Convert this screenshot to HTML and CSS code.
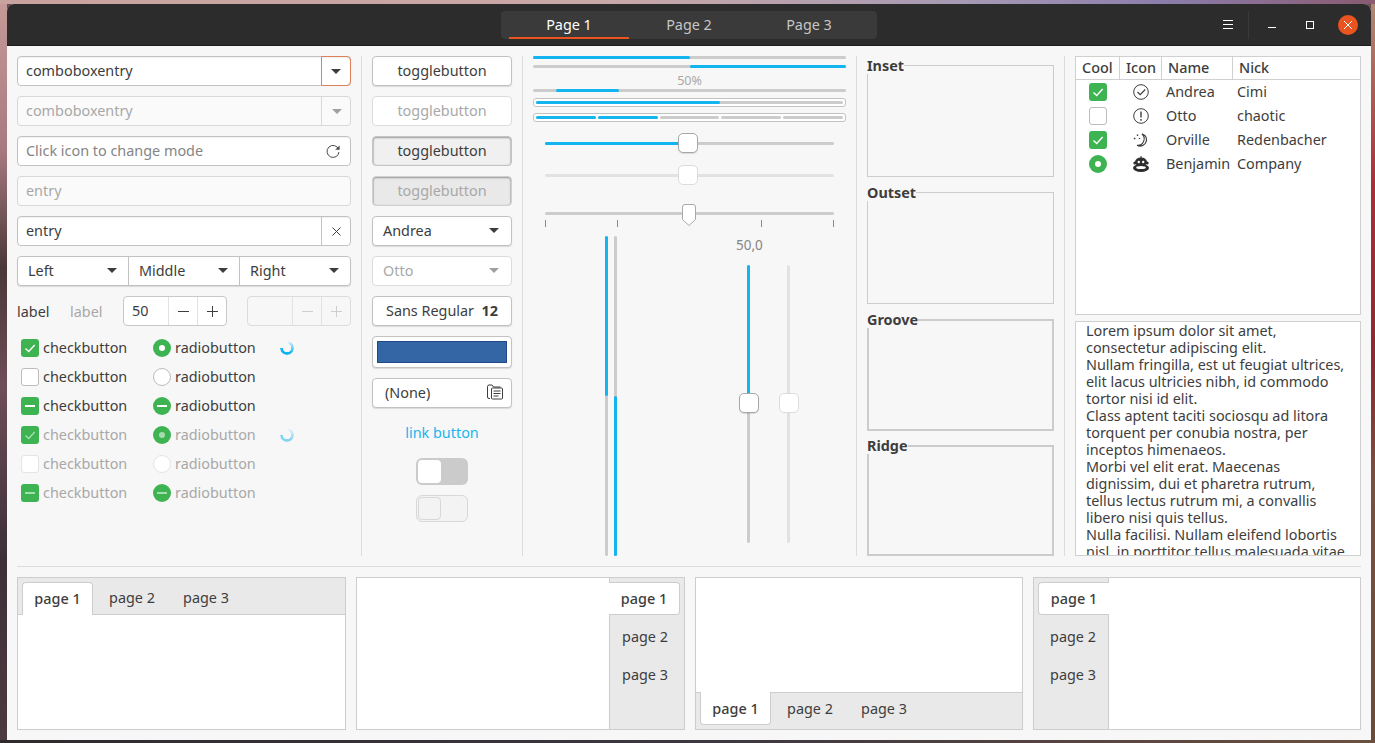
FILE: index.html
```html
<!DOCTYPE html>
<html lang="en">
<head>
  <meta charset="UTF-8">
  <meta name="viewport" content="width=device-width, initial-scale=1.0">
  <title>GTK+ Widget Factory</title>
  <link rel="stylesheet" href="styles.css">
</head>
<body>

  <svg class="sprite" xmlns="http://www.w3.org/2000/svg">
    <symbol id="tick" viewBox="0 0 18 18"><path d="M4.5 9.5l3.2 3 6-6.5" fill="none" stroke="currentColor" stroke-width="1.4"/></symbol>
    <symbol id="dash" viewBox="0 0 18 18"><rect x="4" y="8" width="10" height="2" fill="currentColor"/></symbol>
    <symbol id="dot" viewBox="0 0 18 18"><circle cx="9" cy="9" r="3" fill="currentColor"/></symbol>
    <symbol id="minus" viewBox="0 0 11 11"><path d="M0 5.500h11" stroke="currentColor" stroke-width="1"/></symbol>
    <symbol id="plus" viewBox="0 0 11 11"><path d="M0 5.500h11M5.500 0v11" stroke="currentColor" stroke-width="1"/></symbol>
  </svg>

  <div class="window">

    <!-- Title bar -->
    <header class="titlebar">
      <div></div>
      <div class="stack-switcher">
        <div class="stack-tab active">Page 1</div>
        <div class="stack-tab">Page 2</div>
        <div class="stack-tab">Page 3</div>
      </div>
      <div class="title-controls">
        <svg class="menu-icon" viewBox="0 0 10 9"><path d="M0 .5h10M0 4.5h10M0 8.5h10" stroke="#fff" stroke-width="1"/></svg>
        <span class="title-sep"></span>
        <svg class="win-icon win-min" viewBox="0 0 8 8"><path d="M0 6.500h8" stroke="#fff" stroke-width="1"/></svg>
        <svg class="win-icon win-max" viewBox="0 0 8 8"><rect x=".5" y=".5" width="7" height="7" fill="none" stroke="#fff"/></svg>
        <span class="win-close">
          <svg viewBox="0 0 8 8"><path d="M0 0l8 8M8 0l-8 8" stroke="#fff" stroke-width="1"/></svg>
        </span>
      </div>
    </header>

    <div class="content">
      <div class="top-row">

        <!-- Entries, checks and radios -->
        <div class="col col-entries">
          <div class="field">
            <span class="field-text">comboboxentry</span>
            <span class="field-btn focus"><i class="arrow"></i></span>
          </div>
          <div class="field disabled">
            <span class="field-text">comboboxentry</span>
            <span class="field-btn"><i class="arrow"></i></span>
          </div>
          <div class="field">
            <span class="field-text placeholder">Click icon to change mode</span>
            <svg class="refresh-icon" viewBox="0 0 16 16"><path d="M13.6 6.2A6 6 0 1 0 14 9" fill="none" stroke="#4a4a4a" stroke-width="1"/><path d="M14.6 2.4v4.4h-4.4z" fill="#4a4a4a"/></svg>
          </div>
          <div class="field disabled">
            <span class="field-text">entry</span>
          </div>
          <div class="field">
            <span class="field-text">entry</span>
            <span class="field-btn">
              <svg class="clear-icon" viewBox="0 0 9 9"><path d="M.5.5l8 8M8.5.5l-8 8" stroke="#3d3d3d" stroke-width="1"/></svg>
            </span>
          </div>
          <div class="linked">
            <div class="linked-item"><span>Left</span><i class="arrow"></i></div>
            <div class="linked-item"><span>Middle</span><i class="arrow"></i></div>
            <div class="linked-item"><span>Right</span><i class="arrow"></i></div>
          </div>
          <div class="spin-row">
            <span class="spin-label">label</span>
            <span class="spin-label muted">label</span>
            <div class="spin">
              <span class="spin-value">50</span>
              <span class="spin-btn"><svg><use href="#minus"/></svg></span>
              <span class="spin-btn"><svg><use href="#plus"/></svg></span>
            </div>
            <div class="spin disabled">
              <span class="spin-value"></span>
              <span class="spin-btn"><svg><use href="#minus"/></svg></span>
              <span class="spin-btn"><svg><use href="#plus"/></svg></span>
            </div>
          </div>
          <div class="checks">
            <label class="check-item"><span class="box green"><svg><use href="#tick"/></svg></span>checkbutton</label>
            <label class="check-item"><span class="box round green"><svg><use href="#dot"/></svg></span>radiobutton</label>
            <span class="spinner"></span>

            <label class="check-item"><span class="box"></span>checkbutton</label>
            <label class="check-item"><span class="box round"></span>radiobutton</label>
            <span></span>

            <label class="check-item"><span class="box green"><svg><use href="#dash"/></svg></span>checkbutton</label>
            <label class="check-item"><span class="box round green"><svg><use href="#dash"/></svg></span>radiobutton</label>
            <span></span>

            <label class="check-item off"><span class="box green"><svg><use href="#tick"/></svg></span>checkbutton</label>
            <label class="check-item off"><span class="box round green"><svg><use href="#dot"/></svg></span>radiobutton</label>
            <span class="spinner faded"></span>

            <label class="check-item off"><span class="box"></span>checkbutton</label>
            <label class="check-item off"><span class="box round"></span>radiobutton</label>
            <span></span>

            <label class="check-item off"><span class="box green"><svg><use href="#dash"/></svg></span>checkbutton</label>
            <label class="check-item off"><span class="box round green"><svg><use href="#dash"/></svg></span>radiobutton</label>
            <span></span>
          </div>
        </div>

        <div class="vsep"></div>

        <!-- Buttons -->
        <div class="col col-buttons">
          <div class="btn">togglebutton</div>
          <div class="btn disabled">togglebutton</div>
          <div class="btn pressed">togglebutton</div>
          <div class="btn pressed disabled">togglebutton</div>
          <div class="btn spread"><span>Andrea</span><i class="arrow"></i></div>
          <div class="btn spread disabled"><span>Otto</span><i class="arrow"></i></div>
          <div class="btn font-btn"><span>Sans Regular</span><b>12</b></div>
          <div class="btn color-btn"><span class="swatch"></span></div>
          <div class="btn file-btn">
            <span>(None)</span>
            <svg class="file-icon" viewBox="0 0 16 16" fill="none" stroke="#3d3d3d" stroke-width="1">
              <path d="M3 14.5H2A1.5 1.5 0 0 1 .5 13V2.500A1.500 1.500 0 0 1 2 1h3l1.500 2h7"/>
              <rect x="4.500" y="4" width="11" height="11" rx="1"/>
              <path d="M6.500 7h7M6.500 9.500h7M6.500 12h5"/>
            </svg>
          </div>
          <div class="link-btn">link button</div>
          <div class="switch"><span class="knob"></span></div>
          <div class="switch disabled"><span class="knob"></span></div>
        </div>

        <div class="vsep"></div>

        <!-- Progress bars and scales -->
        <div class="col col-scales">
          <div class="bar"><span class="fill" style="width: 50%"></span></div>
          <div class="bar bar-right"><span class="fill" style="width: 50%"></span></div>
          <div class="bar-text">50%</div>
          <div class="bar"><span class="fill fill-pulse" style="width: 20%"></span></div>
          <div class="bar-box"><div class="bar"><span class="fill" style="width: 60%"></span></div></div>
          <div class="bar-box segments">
            <span class="seg on"></span><span class="seg on"></span><span class="seg"></span><span class="seg"></span><span class="seg"></span>
          </div>
          <div class="hscale"><span class="fill" style="width: 49%"></span><span class="handle"></span></div>
          <div class="hscale disabled"><span class="handle"></span></div>
          <div class="hscale marked">
            <svg class="pointer" viewBox="0 0 14 22"><path d="M.5 3a2.500 2.500 0 0 1 2.500-2.500h8A2.500 2.500 0 0 1 13.500 3v12.500L7 21.500.5 15.500z" fill="#fff" stroke="#a8a8a8"/></svg>
          </div>
          <div class="ticks"><i></i><i></i><i></i><i></i><i></i></div>
          <div class="vertical-area">
            <div class="vbars">
              <div class="vbar"><span class="vfill" style="height: 50%"></span></div>
              <div class="vbar vbar-bottom"><span class="vfill" style="height: 50%"></span></div>
            </div>
            <div class="vscales">
              <div class="vscale-value">50,0</div>
              <div class="vscale-row">
                <div class="vscale"><span class="vfill" style="height: 49%"></span><span class="handle"></span></div>
                <div class="vscale disabled"><span class="handle"></span></div>
              </div>
            </div>
          </div>
        </div>

        <div class="vsep"></div>

        <!-- Frames -->
        <div class="col col-frames">
          <fieldset class="frame"><legend>Inset</legend></fieldset>
          <fieldset class="frame"><legend>Outset</legend></fieldset>
          <fieldset class="frame thick"><legend>Groove</legend></fieldset>
          <fieldset class="frame thick last"><legend>Ridge</legend></fieldset>
        </div>

        <div class="vsep"></div>

        <!-- Tree and text view -->
        <div class="col col-tree">
          <div class="tree">
            <div class="tree-head">
              <span>Cool</span><span>Icon</span><span>Name</span><span>Nick</span>
            </div>
            <div class="tree-row">
              <span class="tree-cell"><span class="box green"><svg><use href="#tick"/></svg></span></span>
              <span class="tree-cell">
                <svg class="tree-icon" viewBox="0 0 16 16" fill="none" stroke="#3d3d3d"><circle cx="8" cy="8" r="7.300"/><path d="M4.500 8l2.700 2.700 5-5.200" stroke-width="1.200"/></svg>
              </span>
              <span>Andrea</span><span>Cimi</span>
            </div>
            <div class="tree-row">
              <span class="tree-cell"><span class="box"></span></span>
              <span class="tree-cell">
                <svg class="tree-icon" viewBox="0 0 16 16" fill="none" stroke="#3d3d3d"><circle cx="8" cy="8" r="7.300"/><path d="M8 3.500v6M8 11v1.800" stroke-width="1.400"/></svg>
              </span>
              <span>Otto</span><span>chaotic</span>
            </div>
            <div class="tree-row">
              <span class="tree-cell"><span class="box green"><svg><use href="#tick"/></svg></span></span>
              <span class="tree-cell">
                <svg class="tree-icon" viewBox="0 0 16 16" fill="none" stroke="#3d3d3d" stroke-width="1.100"><path d="M9 2a6.500 6.500 0 0 1-5 11.300A6.500 6.500 0 0 0 13.500 8 6 6 0 0 0 9 2z"/><path d="M4.500 2.500v1.500M.8 6.500h1.600M6.500 6v1" stroke-width="1.300"/></svg>
              </span>
              <span>Orville</span><span>Redenbacher</span>
            </div>
            <div class="tree-row">
              <span class="tree-cell"><span class="box round green"><svg><use href="#dot"/></svg></span></span>
              <span class="tree-cell">
                <svg class="tree-icon" viewBox="0 0 16 16"><path d="M8 0v2" stroke="#2e2e2e"/><circle cx="1.800" cy="7" r="1.500" fill="#2e2e2e"/><circle cx="14.200" cy="7" r="1.500" fill="#2e2e2e"/><ellipse cx="8" cy="6" rx="6" ry="4.600" fill="#2e2e2e"/><ellipse cx="8" cy="12" rx="8" ry="4" fill="#2e2e2e"/><circle cx="5.800" cy="6" r="1.200" fill="#fff"/><circle cx="10.200" cy="6" r="1.200" fill="#fff"/><ellipse cx="8" cy="11.500" rx="4.800" ry="1.500" fill="#fff"/></svg>
              </span>
              <span>Benjamin</span><span>Company</span>
            </div>
          </div>
          <div class="textview">
            <div>Lorem ipsum dolor sit amet,</div>
            <div>consectetur adipiscing elit.</div>
            <div>Nullam fringilla, est ut feugiat ultrices,</div>
            <div>elit lacus ultricies nibh, id commodo</div>
            <div>tortor nisi id elit.</div>
            <div>Class aptent taciti sociosqu ad litora</div>
            <div>torquent per conubia nostra, per</div>
            <div>inceptos himenaeos.</div>
            <div>Morbi vel elit erat. Maecenas</div>
            <div>dignissim, dui et pharetra rutrum,</div>
            <div>tellus lectus rutrum mi, a convallis</div>
            <div>libero nisi quis tellus.</div>
            <div>Nulla facilisi. Nullam eleifend lobortis</div>
            <div>nisl, in porttitor tellus malesuada vitae.</div>
          </div>
        </div>
      </div>

      <div class="hsep"></div>

      <!-- Notebooks -->
      <div class="notebooks">
        <div class="notebook nb-top">
          <div class="tabs">
            <span class="tab active">page 1</span><span class="tab">page 2</span><span class="tab">page 3</span>
          </div>
          <div class="page"></div>
        </div>
        <div class="notebook nb-right">
          <div class="page"></div>
          <div class="tabs">
            <span class="tab active">page 1</span><span class="tab">page 2</span><span class="tab">page 3</span>
          </div>
        </div>
        <div class="notebook nb-bottom">
          <div class="page"></div>
          <div class="tabs">
            <span class="tab active">page 1</span><span class="tab">page 2</span><span class="tab">page 3</span>
          </div>
        </div>
        <div class="notebook nb-left">
          <div class="tabs">
            <span class="tab active">page 1</span><span class="tab">page 2</span><span class="tab">page 3</span>
          </div>
          <div class="page"></div>
        </div>
      </div>
    </div>
  </div>

</body>
</html>
```

FILE: styles.css
```css
/* General full-screen styling */
* {
  margin: 0;
  padding: 0;
  box-sizing: border-box;
  font-family: "Noto Sans", "Open Sans", sans-serif;
}
html, body {
  width: 1375px;
  height: 743px;
  overflow: hidden;
}
body {
  padding: 4px 4px 3px 7px;
  font-size: 14.4px;
  line-height: 17px;
  color: #3d3d3d;
  background-color: #6a4a55;
  background-image:
    linear-gradient(90deg, #c9a39e 0, #c8a8a8 45%, #a79ab4 70%, #8b7dab 85%, #8a5a70 100%),
    linear-gradient(90deg, #2e2a2c 0, #3b3640 50%, #6a5040 100%),
    linear-gradient(180deg, #c59a98 0, #a87a80 20%, #4a3838 36%, #6e4d58 52%, #3d2f38 75%, #4e3a40 100%),
    linear-gradient(180deg, #b08a70 0, #a83038 25%, #8a2a30 48%, #7a5040 65%, #6a4a38 100%);
  background-size: 100% 4px, 100% 3px, 7px 100%, 4px 100%;
  background-position: top left, bottom left, top left, top right;
  background-repeat: no-repeat;
}
.sprite {
  display: none;
}

/* Window frame */
.window {
  width: 1364px;
  height: 736px;
  display: flex;
  flex-direction: column;
  background-color: #f7f7f7;
  border-radius: 7px 7px 0 0;
  overflow: hidden;
}

/* Title bar */
.titlebar {
  height: 42px;
  flex: none;
  display: grid;
  grid-template-columns: 1fr auto 1fr;
  align-items: center;
  background-color: #2c2c2c;
  border-bottom: 1px solid #1e1e1e;
}
.stack-switcher {
  width: 376px;
  height: 28px;
  padding: 0 8px;
  display: flex;
  background-color: #3a3a3a;
  border-radius: 4px;
}
.stack-tab {
  flex: 1;
  text-align: center;
  line-height: 28px;
  color: #c6c6c6;
}
.stack-tab.active {
  color: #fff;
  box-shadow: inset 0 -2px 0 #e95420;
}
.title-controls {
  display: flex;
  align-items: center;
  justify-content: flex-end;
  padding-right: 13px;
}
.menu-icon {
  width: 10px;
  height: 9px;
  margin-right: 15px;
}
.title-sep {
  width: 1px;
  height: 28px;
  background-color: #3a3a3a;
  margin-right: 19px;
}
.win-icon {
  width: 8px;
  height: 8px;
}
.win-min {
  margin-right: 30px;
}
.win-max {
  margin-right: 24px;
}
.win-close {
  width: 20px;
  height: 20px;
  border-radius: 50%;
  background-color: #e95420;
  display: flex;
  align-items: center;
  justify-content: center;
}
.win-close svg {
  width: 8px;
  height: 8px;
}

/* Content layout */
.content {
  flex: 1;
  padding: 10px;
  display: flex;
  flex-direction: column;
}
.top-row {
  height: 500px;
  display: flex;
}
.vsep {
  width: 1px;
  margin: 0 10px;
  background-color: #dcdcdc;
}
.hsep {
  height: 1px;
  margin: 10px 0;
  background-color: #dcdcdc;
}
.col-entries {
  width: 334px;
  display: flex;
  flex-direction: column;
  gap: 10px;
}
.col-buttons {
  width: 140px;
  display: flex;
  flex-direction: column;
  gap: 10px;
}
.col-scales {
  width: 313px;
  display: flex;
  flex-direction: column;
}
.col-frames {
  width: 187px;
  padding-top: 1px;
  display: flex;
  flex-direction: column;
  gap: 7px;
}
.col-tree {
  width: 286px;
  display: flex;
  flex-direction: column;
  gap: 6px;
}

/* Arrow used by combos */
.arrow {
  width: 0;
  height: 0;
  flex: none;
  border-left: 5px solid transparent;
  border-right: 5px solid transparent;
  border-top: 5px solid #3d3d3d;
}

/* Entries */
.field {
  height: 30px;
  display: flex;
  align-items: center;
  background-color: #fff;
  border: 1px solid #c2c2c2;
  border-radius: 4px;
  box-shadow: inset 0 1px 1px rgba(0, 0, 0, 0.06);
}
.field-text {
  flex: 1;
  padding: 0 0 2px 8px;
}
.placeholder {
  color: #858585;
}
.field-btn {
  width: 30px;
  height: 30px;
  margin: -1px -1px -1px 0;
  display: flex;
  align-items: center;
  justify-content: center;
  border-left: 1px solid #c2c2c2;
  border-radius: 0 4px 4px 0;
}
.field-btn.focus {
  border: 1px solid #e0805a;
}
.field.disabled {
  background-color: #fafafa;
  border-color: #d8d8d8;
  color: #a8a8a8;
  box-shadow: none;
}
.field.disabled .field-btn {
  border-left-color: #d8d8d8;
}
.field.disabled .arrow {
  border-top-color: #a0a0a0;
}
.refresh-icon {
  width: 16px;
  height: 16px;
  margin-right: 9px;
}
.clear-icon {
  width: 9px;
  height: 9px;
}

/* Linked combo buttons */
.linked {
  height: 30px;
  display: flex;
  background-color: #fff;
  border: 1px solid #c2c2c2;
  border-radius: 4px;
  box-shadow: 0 1px 1px rgba(0, 0, 0, 0.12);
}
.linked-item {
  flex: 1;
  display: flex;
  align-items: center;
  justify-content: space-between;
  padding: 0 11px 2px 10px;
  border-left: 1px solid #c2c2c2;
}
.linked-item:first-child {
  border-left: none;
}

/* Spin row */
.spin-row {
  height: 30px;
  display: flex;
  align-items: center;
}
.spin-label {
  width: 53px;
}
.spin-label.muted {
  color: #a8a8a8;
}
.spin {
  width: 104px;
  height: 30px;
  display: flex;
  align-items: stretch;
  background-color: #fff;
  border: 1px solid #c8c8c8;
  border-radius: 4px;
}
.spin + .spin {
  margin-left: 20px;
}
.spin-value {
  width: 44px;
  padding-left: 8px;
  line-height: 27px;
}
.spin-btn {
  flex: 1;
  display: flex;
  align-items: center;
  justify-content: center;
  border-left: 1px solid #e2e2e2;
}
.spin-btn svg {
  width: 11px;
  height: 11px;
}
.spin.disabled {
  background-color: #f7f7f7;
  border-color: #dcdcdc;
  color: #cfcfcf;
}

/* Check and radio grid */
.checks {
  margin-top: -3px;
  padding-left: 4px;
  display: grid;
  grid-template-columns: 132px 127px 1fr;
  grid-auto-rows: 29px;
  align-items: center;
}
.check-item {
  display: flex;
  align-items: center;
  gap: 4px;
}
.check-item.off {
  color: #a8a8a8;
}
.box {
  width: 18px;
  height: 18px;
  flex: none;
  display: block;
  color: #fff;
  background-color: #fff;
  border: 1px solid #bcbcbc;
  border-radius: 3px;
}
.box svg {
  display: block;
  width: 18px;
  height: 18px;
}
.box.round {
  border-radius: 50%;
}
.box.green {
  background-color: #3db351;
  border: none;
}
.check-item.off .box {
  border-color: #e4e4e4;
}
.check-item.off .box.green {
  color: #a5dcae;
}
.spinner {
  width: 14px;
  height: 14px;
  border-radius: 50%;
  background: conic-gradient(transparent 0 5deg, #bfe9fb 30deg, #12b5f0 150deg, #12b5f0 270deg, transparent 271deg);
  -webkit-mask: radial-gradient(circle, transparent 4px, #000 4.500px);
  mask: radial-gradient(circle, transparent 4px, #000 4.500px);
}
.spinner.faded {
  opacity: 0.5;
}

/* Buttons */
.btn {
  height: 30px;
  flex: none;
  display: flex;
  align-items: center;
  justify-content: center;
  padding-bottom: 2px;
  background-color: #fff;
  border: 1px solid #c2c2c2;
  border-radius: 4px;
  box-shadow: 0 1px 1px rgba(0, 0, 0, 0.12);
}
.btn.disabled {
  color: #a8a8a8;
  border-color: #dcdcdc;
  box-shadow: none;
}
.btn.disabled .arrow {
  border-top-color: #a0a0a0;
}
.btn.pressed {
  background-color: #f0f0f0;
  border-color: #c4c4c4;
  box-shadow: inset 0 1px 2px rgba(0, 0, 0, 0.35), inset 1px 0 1px rgba(0, 0, 0, 0.1), inset -1px 0 1px rgba(0, 0, 0, 0.1);
}
.btn.pressed.disabled {
  background-color: #e9e9e9;
  border-color: #d0d0d0;
}
.spread {
  justify-content: space-between;
  padding-left: 10px;
  padding-right: 12px;
}
.font-btn {
  justify-content: space-between;
  padding-left: 13px;
  padding-right: 13px;
}
.color-btn {
  height: 32px;
  padding-bottom: 0;
}
.swatch {
  width: 130px;
  height: 22px;
  background-color: #3465a4;
  border: 1px solid #204a87;
}
.file-btn {
  justify-content: space-between;
  padding-left: 12px;
  padding-right: 8px;
}
.file-icon {
  width: 16px;
  height: 16px;
}
.link-btn {
  height: 30px;
  flex: none;
  text-align: center;
  line-height: 30px;
  color: #19b6ee;
}
.switch {
  width: 52px;
  height: 27px;
  flex: none;
  align-self: center;
  padding: 2px;
  margin-top: 0;
  background-color: #cbcbcb;
  border-radius: 6px;
}
.knob {
  display: block;
  width: 23px;
  height: 23px;
  background-color: #fff;
  border-radius: 4px;
}
.switch.disabled {
  padding: 1px;
  background-color: #f3f3f3;
  border: 1px solid #d8d8d8;
}
.switch.disabled .knob {
  background-color: #f3f3f3;
  border: 1px solid #d8d8d8;
}

/* Progress bars */
.bar {
  height: 3px;
  flex: none;
  display: flex;
  background-color: #cccccc;
  border-radius: 2px;
}
.bar .fill {
  background-color: #12b5f0;
  border-radius: 2px;
}
.bar-right {
  justify-content: flex-end;
  margin-top: 6px;
}
.bar-text {
  height: 17px;
  margin-top: 4px;
  text-align: center;
  font-size: 12.5px;
  color: #a8a8a8;
}
.fill-pulse {
  margin-left: 7.500%;
}
.bar-box {
  height: 9px;
  margin-top: 6px;
  padding: 2px 2px;
  background-color: #fff;
  border: 1px solid #c2c2c2;
  border-radius: 3px;
}
.segments {
  display: flex;
  gap: 2px;
}
.seg {
  flex: 1;
  height: 3px;
  background-color: #cccccc;
  border-radius: 2px;
}
.seg.on {
  background-color: #12b5f0;
}

/* Scales */
.hscale {
  position: relative;
  height: 3px;
  flex: none;
  margin: 20px 12px 0;
  display: flex;
  background-color: #cccccc;
  border-radius: 2px;
}
.hscale .fill {
  background-color: #12b5f0;
  border-radius: 2px;
}
.handle {
  position: absolute;
  width: 20px;
  height: 20px;
  left: calc(49% - 9px);
  top: -9px;
  background-color: #fff;
  border: 1px solid #a8a8a8;
  border-radius: 5px;
  box-shadow: 0 1px 1px rgba(0, 0, 0, 0.12);
}
.hscale.disabled {
  margin-top: 29px;
  background-color: #e2e2e2;
}
.disabled .handle {
  border-color: #dcdcdc;
  box-shadow: none;
}
.hscale.marked {
  margin-top: 35px;
}
.pointer {
  position: absolute;
  width: 14px;
  height: 22px;
  left: calc(50% - 8px);
  top: -8px;
}
.ticks {
  height: 7px;
  margin: 5px 12px 0;
  display: flex;
  justify-content: space-between;
}
.ticks i {
  width: 1px;
  background-color: #8a8a8a;
}
.ticks i:nth-child(3) {
  visibility: hidden;
}
.vertical-area {
  flex: 1;
  margin-top: 9px;
  display: flex;
}
.vbars {
  margin-left: 72px;
  display: flex;
  gap: 6px;
}
.vbar {
  width: 3px;
  display: flex;
  flex-direction: column;
  background-color: #cccccc;
  border-radius: 2px;
}
.vbar-bottom {
  justify-content: flex-end;
}
.vfill {
  display: block;
  width: 3px;
  background-color: #12b5f0;
  border-radius: 2px;
}
.vscales {
  margin-left: 130px;
  display: flex;
  flex-direction: column;
}
.vscale-value {
  height: 20px;
  width: 60px;
  margin-left: -11px;
  padding-top: 1px;
  font-size: 13.5px;
  color: #858585;
}
.vscale-row {
  height: 278px;
  margin-top: 9px;
  display: flex;
  gap: 37px;
}
.vscale {
  position: relative;
  width: 3px;
  background-color: #cccccc;
  border-radius: 2px;
}
.vscale .handle {
  left: -8px;
  top: calc(50% - 11px);
}
.vscale.disabled {
  background-color: #e2e2e2;
}

/* Frames */
.frame {
  height: 120px;
  flex: none;
  min-height: 0;
  border: 1px solid #cccccc;
}
.frame.thick {
  border-width: 2px;
}
.frame.thick legend {
  margin-left: -2px;
}
.frame.last {
  height: auto;
  flex: 1;
  margin-top: -1px;
}
.frame legend {
  margin-left: -1px;
  padding: 0;
  font-weight: 700;
  line-height: 17px;
}

/* Tree view */
.tree {
  flex: 1;
  background-color: #fff;
  border: 1px solid #d0d0d0;
}
.tree-head {
  height: 23px;
  display: grid;
  grid-template-columns: 43px 42px 71px 1fr;
  align-items: center;
  border-bottom: 1px solid #d0d0d0;
  font-weight: 500;
}
.tree-head span {
  height: 22px;
  line-height: 22px;
  padding-left: 6px;
  border-left: 1px solid #d0d0d0;
}
.tree-head span:first-child {
  border-left: none;
}
.tree-row {
  height: 24px;
  display: grid;
  grid-template-columns: 44px 42px 75px 1fr;
  align-items: center;
}
.tree-row > span:nth-child(3) {
  padding: 0 0 2px 4px;
  white-space: nowrap;
}
.tree-row > span:nth-child(4) {
  padding-bottom: 2px;
}
.tree-cell {
  display: flex;
  justify-content: center;
}
.tree-icon {
  width: 16px;
  height: 16px;
}

/* Text view */
.textview {
  height: 235px;
  flex: none;
  padding: 0 10px;
  overflow: hidden;
  white-space: nowrap;
  background-color: #fff;
  border: 1px solid #d0d0d0;
}

/* Notebooks */
.notebooks {
  height: 153px;
  display: flex;
  gap: 10px;
}
.notebook {
  flex: 0 0 329px;
  display: flex;
  border: 1px solid #cdcdcd;
  background-color: #fff;
}
.nb-bottom, .nb-left {
  flex-basis: 328px;
}
.page {
  flex: 1;
}
.tabs {
  display: flex;
  flex: none;
  background-color: #e9e9e9;
}
.tab {
  flex: none;
  text-align: center;
  line-height: 17px;
}
.tab.active {
  background-color: #fff;
  font-weight: 500;
  border: 1px solid #cdcdcd;
}

/* Top and bottom tabs */
.nb-top, .nb-bottom {
  flex-direction: column;
}
.nb-top .tabs, .nb-bottom .tabs {
  height: 37px;
  padding-left: 4px;
}
.nb-top .tabs {
  align-items: flex-end;
  border-bottom: 1px solid #cdcdcd;
}
.nb-bottom .tabs {
  align-items: flex-start;
  border-top: 1px solid #cdcdcd;
}
.nb-top .tab, .nb-bottom .tab {
  width: 74px;
  height: 33px;
}
.nb-top .tab {
  line-height: 34px;
}
.nb-bottom .tab {
  line-height: 32px;
}
.nb-top .tab.active, .nb-bottom .tab.active {
  width: 71px;
  margin-right: 2px;
}
.nb-top .tab.active {
  margin-bottom: -1px;
  line-height: 31px;
  border-bottom: none;
  border-radius: 4px 4px 0 0;
}
.nb-bottom .tab.active {
  margin-top: -1px;
  line-height: 34px;
  border-top: none;
  border-radius: 0 0 4px 4px;
}

/* Left and right tabs */
.nb-left .tabs, .nb-right .tabs {
  width: 75px;
  padding-top: 4px;
  flex-direction: column;
}
.nb-left .tabs {
  align-items: flex-end;
  border-right: 1px solid #cdcdcd;
}
.nb-right .tabs {
  align-items: flex-start;
  border-left: 1px solid #cdcdcd;
}
.nb-left .tab, .nb-right .tab {
  width: 70px;
  height: 38px;
  line-height: 38px;
}
.nb-left .tab.active, .nb-right .tab.active {
  width: 71px;
  height: 33px;
  margin-bottom: 3px;
  line-height: 32px;
}
.nb-left .tab.active {
  margin-right: -1px;
  border-right: none;
  border-radius: 4px 0 0 4px;
}
.nb-right .tab.active {
  margin-left: -1px;
  border-left: none;
  border-radius: 0 4px 4px 0;
}
```
